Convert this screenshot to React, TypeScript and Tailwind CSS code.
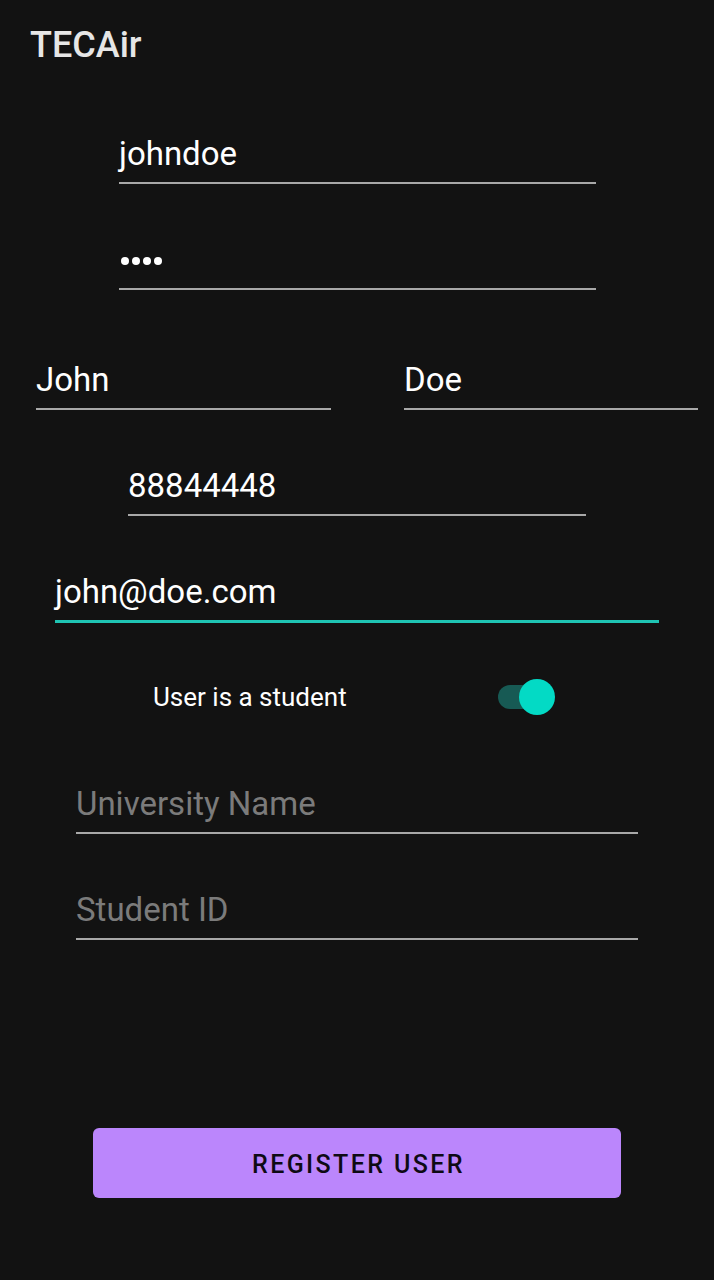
import React from "react";

const font = { fontFamily: "Roboto, 'Noto Sans', sans-serif" };

function Field({
  value,
  placeholder,
  className,
  line = "border-[#a8a8a8] border-b-2",
}: {
  value?: string;
  placeholder?: string;
  className: string;
  line?: string;
}) {
  return (
    <div className={`${className} pb-[8px] ${line}`}>
      <div
        className={`text-[33px] leading-[40px] whitespace-nowrap ${
          value ? "text-white" : "text-[#7b7b7b]"
        }`}
      >
        {value ?? placeholder}
      </div>
    </div>
  );
}

export default function App() {
  return (
    <div
      className="w-[714px] h-[1280px] bg-[#121212] flex flex-col overflow-hidden"
      style={font}
    >
      <div className="pt-[25px] pl-[30px] text-[36px] leading-[40px] font-medium text-[#e6e6e6]">
        TECAir
      </div>

      <Field value="johndoe" className="mt-[69px] ml-[119px] w-[477px]" />
      <div className="mt-[56px] ml-[119px] w-[477px] pb-[8px] border-b-2 border-[#a8a8a8]">
        <div className="h-[40px] flex items-center pl-[2px] pt-[2px] gap-[3px]">
          {[0, 1, 2, 3].map((i) => (
            <span key={i} className="block w-[8px] h-[8px] rounded-full bg-white" />
          ))}
        </div>
      </div>

      <div className="mt-[70px] flex">
        <Field value="John" className="ml-[36px] w-[295px]" />
        <Field value="Doe" className="ml-[73px] w-[294px]" />
      </div>

      <Field value="88844448" className="mt-[56px] ml-[128px] w-[458px]" />

      <Field
        value="john@doe.com"
        className="mt-[56px] ml-[55px] w-[604px]"
        line="border-b-[3px] border-[#1fc4b3]"
      />

      <div className="mt-[54px] h-[40px] flex items-center">
        <div className="ml-[153px] w-[192px] text-[26px] text-white leading-[40px] whitespace-nowrap">
          User is a student
        </div>
        <div className="ml-[153px] relative w-[58px] h-[40px] flex items-center">
          <div className="w-[52px] h-[24px] rounded-full bg-[#175a54]" />
          <div className="absolute left-[21px] top-[2px] w-[36px] h-[36px] rounded-full bg-[#03dac5]" />
        </div>
      </div>

      <Field placeholder="University Name" className="mt-[67px] ml-[76px] w-[562px]" />
      <Field placeholder="Student ID" className="mt-[56px] ml-[76px] w-[562px]" />

      <button className="mt-[188px] ml-[93px] w-[528px] h-[70px] pt-[3px] pl-[3px] rounded-[6px] bg-[#bb86fc] text-[#0e0a14] text-[25px] font-medium tracking-[2.4px] flex items-center justify-center">
        REGISTER USER
      </button>
    </div>
  );
}
